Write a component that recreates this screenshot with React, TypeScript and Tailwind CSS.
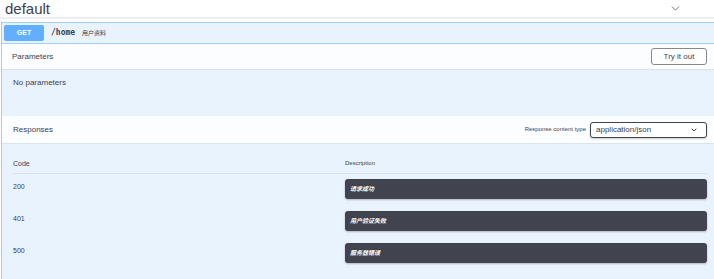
import { ChevronDown } from "lucide-react";

const responses = [
  { code: "200", description: "请求成功" },
  { code: "401", description: "用户验证失败" },
  { code: "500", description: "服务器错误" },
];

const sans = "font-['Liberation_Sans','Noto_Sans_CJK_SC',sans-serif]";

export default function App() {
  return (
    <div className={`h-[279px] w-[714px] overflow-hidden bg-white text-[#3b4151] ${sans}`}>
      <div className="flex h-[19px] items-center justify-between border-b-2 border-[#eceef0] pl-[5px] pr-[32px]">
        <span className="text-[15px] leading-[16px] text-[#3b4151]">default</span>
        <ChevronDown size={13} strokeWidth={1.5} className="text-[#555]" />
      </div>

      <div className="mt-[3px] ml-[1px] border-t border-l border-[#9fcdfd] bg-[#e9f3fd]">
        <div className="flex h-[21px] items-center gap-[7px] border-b border-[#9fcdfd] pl-[2px]">
          <span className="flex h-[16px] w-[40px] items-center justify-center rounded-[2px] bg-[#61affe] text-[7px] font-bold text-white">
            GET
          </span>
          <span className="font-['DejaVu_Sans_Mono',monospace] text-[8px] font-bold text-[#3b4151]">/home</span>
          <span className="text-[6px] text-[#3b4151]">用户资料</span>
        </div>

        <div className="flex h-[25px] items-center justify-between bg-white/85 pl-[10px] pr-[7px] shadow-[0_1px_1px_rgba(0,0,0,0.06)]">
          <span className="text-[8px] text-[#3b4151]">Parameters</span>
          <button className="flex h-[17px] w-[56px] items-center justify-center rounded-[3px] border border-[#888] bg-white text-[8px] font-medium text-[#3b4151]">
            Try it out
          </button>
        </div>

        <div className="h-[47px] pl-[11px] pt-[8px] text-[8px] text-[#3b4151]">No parameters</div>

        <div className="flex h-[27px] items-center justify-between bg-white/85 pl-[11px] pr-[7px] shadow-[0_1px_1px_rgba(0,0,0,0.06)]">
          <span className="text-[8px] text-[#3b4151]">Responses</span>
          <div className="flex items-center gap-[4px]">
            <span className="text-[6px] text-[#3b4151]">Response content type</span>
            <div className="flex h-[16px] w-[117px] items-center justify-between rounded-[3px] border-[1.5px] border-[#41444e] bg-white pl-[5px] pr-[8px] shadow-[0_1px_2px_rgba(0,0,0,0.2)]">
              <span className="text-[8px] text-[#3b4151]">application/json</span>
              <ChevronDown size={8} strokeWidth={3} className="text-[#3b4151]" />
            </div>
          </div>
        </div>

        <div className="pb-[16px] pl-[11px] pr-[7px] pt-[16px]">
          <div className="flex h-[15px] items-start border-b border-[#dde3ea] pr-[3px] text-[7px] text-[#3b4151]">
            <span className="w-[332px]">Code</span>
            <span className="text-[6px]">Description</span>
          </div>
          <div className="mt-[5px] flex flex-col gap-[12px]">
            {responses.map((r) => (
              <div key={r.code} className="flex">
                <span className="w-[332px] pt-[3px] text-[7px] text-[#3b4151]">{r.code}</span>
                <div className="flex h-[20px] flex-1 items-center rounded-[3px] bg-[#41444e] pl-[5px] text-[6px] font-bold italic text-white shadow-[0_1px_2px_rgba(0,0,0,0.25)]">
                  {r.description}
                </div>
              </div>
            ))}
          </div>
        </div>
      </div>
    </div>
  );
}
